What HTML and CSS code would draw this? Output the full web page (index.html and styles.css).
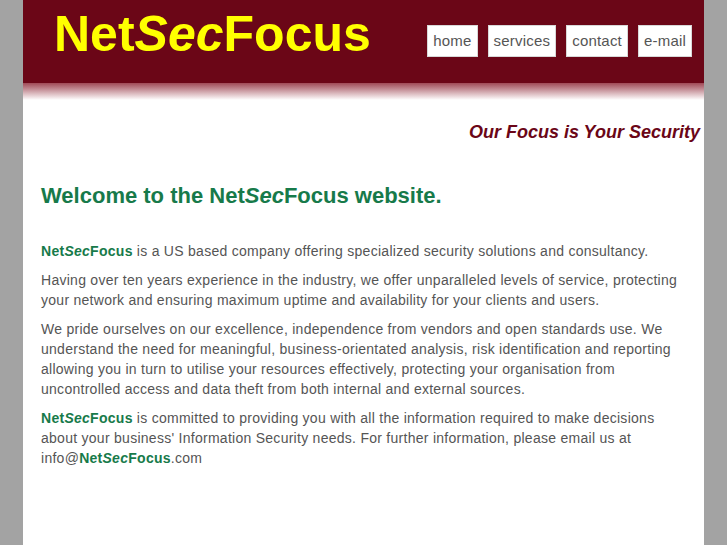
FILE: index.html
```html
<!DOCTYPE html>
<html lang="en">
<head>
  <meta charset="UTF-8" />
  <title>NetSecFocus - Our Focus is Your Security</title>
  <link rel="stylesheet" href="styles.css">
</head>
<body>
  <div class="page">
    <div class="header">
      <div class="logo">Net<em>Sec</em>Focus</div>
      <ul class="nav">
        <li><a href="#">home</a></li>
        <li><a href="#">services</a></li>
        <li><a href="#">contact</a></li>
        <li><a href="#">e-mail</a></li>
      </ul>
    </div>
    <div class="fade"></div>

    <div class="tagline">Our Focus is Your Security</div>

    <div class="content">
      <h1>Welcome to the Net<em>Sec</em>Focus website.</h1>

      <p><b class="brand">Net<em>Sec</em>Focus</b> is a US based company offering specialized security solutions and consultancy.</p>

      <p>Having over ten years experience in the industry, we offer unparalleled levels of service, protecting your network and ensuring maximum uptime and availability for your clients and users.</p>

      <p>We pride ourselves on our excellence, independence from vendors and open standards use. We understand the need for meaningful, business-orientated analysis, risk identification and reporting allowing you in turn to utilise your resources effectively, protecting your organisation from uncontrolled access and data theft from both internal and external sources.</p>

      <p><b class="brand">Net<em>Sec</em>Focus</b> is committed to providing you with all the information required to make decisions about your business' Information Security needs. For further information, please email us at info@<b class="brand">Net<em>Sec</em>Focus</b>.com</p>
    </div>
  </div>
</body>
</html>
```

FILE: styles.css
```css
html, body {
  height: 100%;
}

body {
  margin: 0;
  background: #a3a3a3;
  font-family: "Liberation Sans", Arial, sans-serif;
  color: #555;
}

.page {
  width: 681px;
  min-height: 100%;
  margin: 0 auto;
  background: #fff;
}

.header {
  height: 83px;
  background: #6b0617;
  display: flex;
  justify-content: space-between;
  align-items: flex-start;
  box-sizing: border-box;
  padding: 9px 12px 0 31px;
}

.fade {
  height: 17px;
  background: linear-gradient(#a04a57, #fff);
}

.logo {
  font-size: 50px;
  line-height: 50px;
  font-weight: bold;
  color: #ffff00;
}

.logo em {
  font-style: italic;
}

.nav {
  list-style: none;
  margin: 16px 0 0;
  padding: 0;
  display: flex;
  gap: 10px;
}

.nav a {
  display: block;
  padding: 6px 5px;
  font-size: 15px;
  line-height: 18px;
  letter-spacing: 0.2px;
  color: #555;
  text-decoration: none;
  background: #fff;
  border: 1px solid #d8d8d8;
}

.tagline {
  margin-top: 21px;
  padding-right: 4px;
  text-align: right;
  font-size: 18px;
  line-height: 22px;
  font-weight: bold;
  font-style: italic;
  color: #6b0617;
}

.content {
  padding: 40px 18px 40px;
}

.content h1 {
  margin: 0 0 32px;
  font-size: 22px;
  line-height: 26px;
  color: #177a4a;
}

.content h1 em,
.brand em {
  font-style: italic;
}

.content p {
  margin: 0 0 9px;
  font-size: 14px;
  line-height: 20px;
  letter-spacing: 0.27px;
}

.brand {
  color: #177a4a;
}
```
